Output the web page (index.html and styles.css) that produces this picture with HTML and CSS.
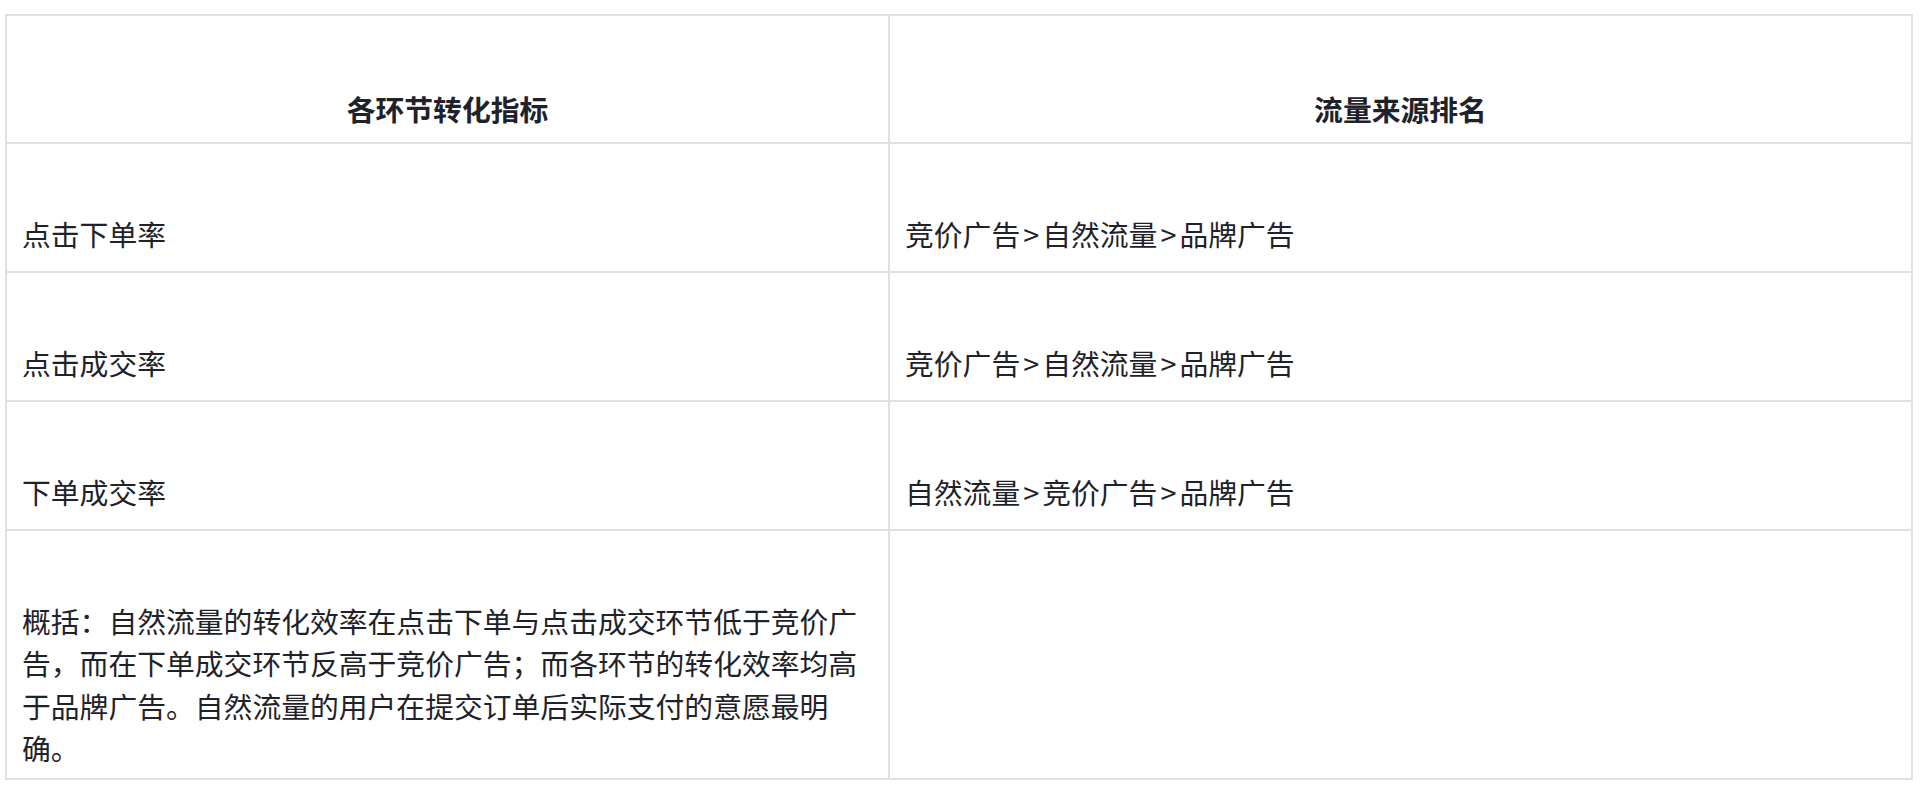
FILE: index.html
```html
<!DOCTYPE html>
<html lang="zh-CN">
<head>
<meta charset="utf-8">
<title>流量来源转化</title>
<link rel="stylesheet" href="styles.css">
</head>
<body>
<div class="page">
  <table class="grid">
    <colgroup>
      <col class="col-a">
      <col class="col-b">
    </colgroup>
    <thead>
      <tr class="row-head">
        <th>各环节转化指标</th>
        <th>流量来源排名</th>
      </tr>
    </thead>
    <tbody>
      <tr class="row">
        <td>点击下单率</td>
        <td>竞价广告<span class="sep">&gt;</span>自然流量<span class="sep">&gt;</span>品牌广告</td>
      </tr>
      <tr class="row">
        <td>点击成交率</td>
        <td>竞价广告<span class="sep">&gt;</span>自然流量<span class="sep">&gt;</span>品牌广告</td>
      </tr>
      <tr class="row">
        <td>下单成交率</td>
        <td>自然流量<span class="sep">&gt;</span>竞价广告<span class="sep">&gt;</span>品牌广告</td>
      </tr>
      <tr class="row-last">
        <td>概括：自然流量的转化效率在点击下单与点击成交环节低于竞价广告，而在下单成交环节反高于竞价广告；而各环节的转化效率均高于品牌广告。自然流量的用户在提交订单后实际支付的意愿最明确。</td>
        <td></td>
      </tr>
    </tbody>
  </table>
</div>
</body>
</html>
```

FILE: styles.css
```css
html, body {
  margin: 0;
  padding: 0;
  background: #ffffff;
}

.page {
  padding: 14px 12px 0 5px;
  font-family: "Noto Sans CJK SC", "Noto Sans", sans-serif;
  color: #1f2329;
}

.grid {
  width: 100%;
  border-collapse: collapse;
  table-layout: fixed;
}

.col-a {
  width: 883px;
}

.grid th,
.grid td {
  border: 2px solid #dee0e3;
  padding: 69px 15px 0;
  vertical-align: top;
  font-size: 28.8px;
  line-height: 42.3px;
  text-align: left;
  word-break: break-all;
}

.grid th {
  padding-top: 72px;
  font-weight: 700;
  text-align: center;
}

.sep {
  margin: 0 3px;
}

.row-head {
  height: 128px;
}

.row {
  height: 129px;
}

.row-last {
  height: 249px;
}
```
